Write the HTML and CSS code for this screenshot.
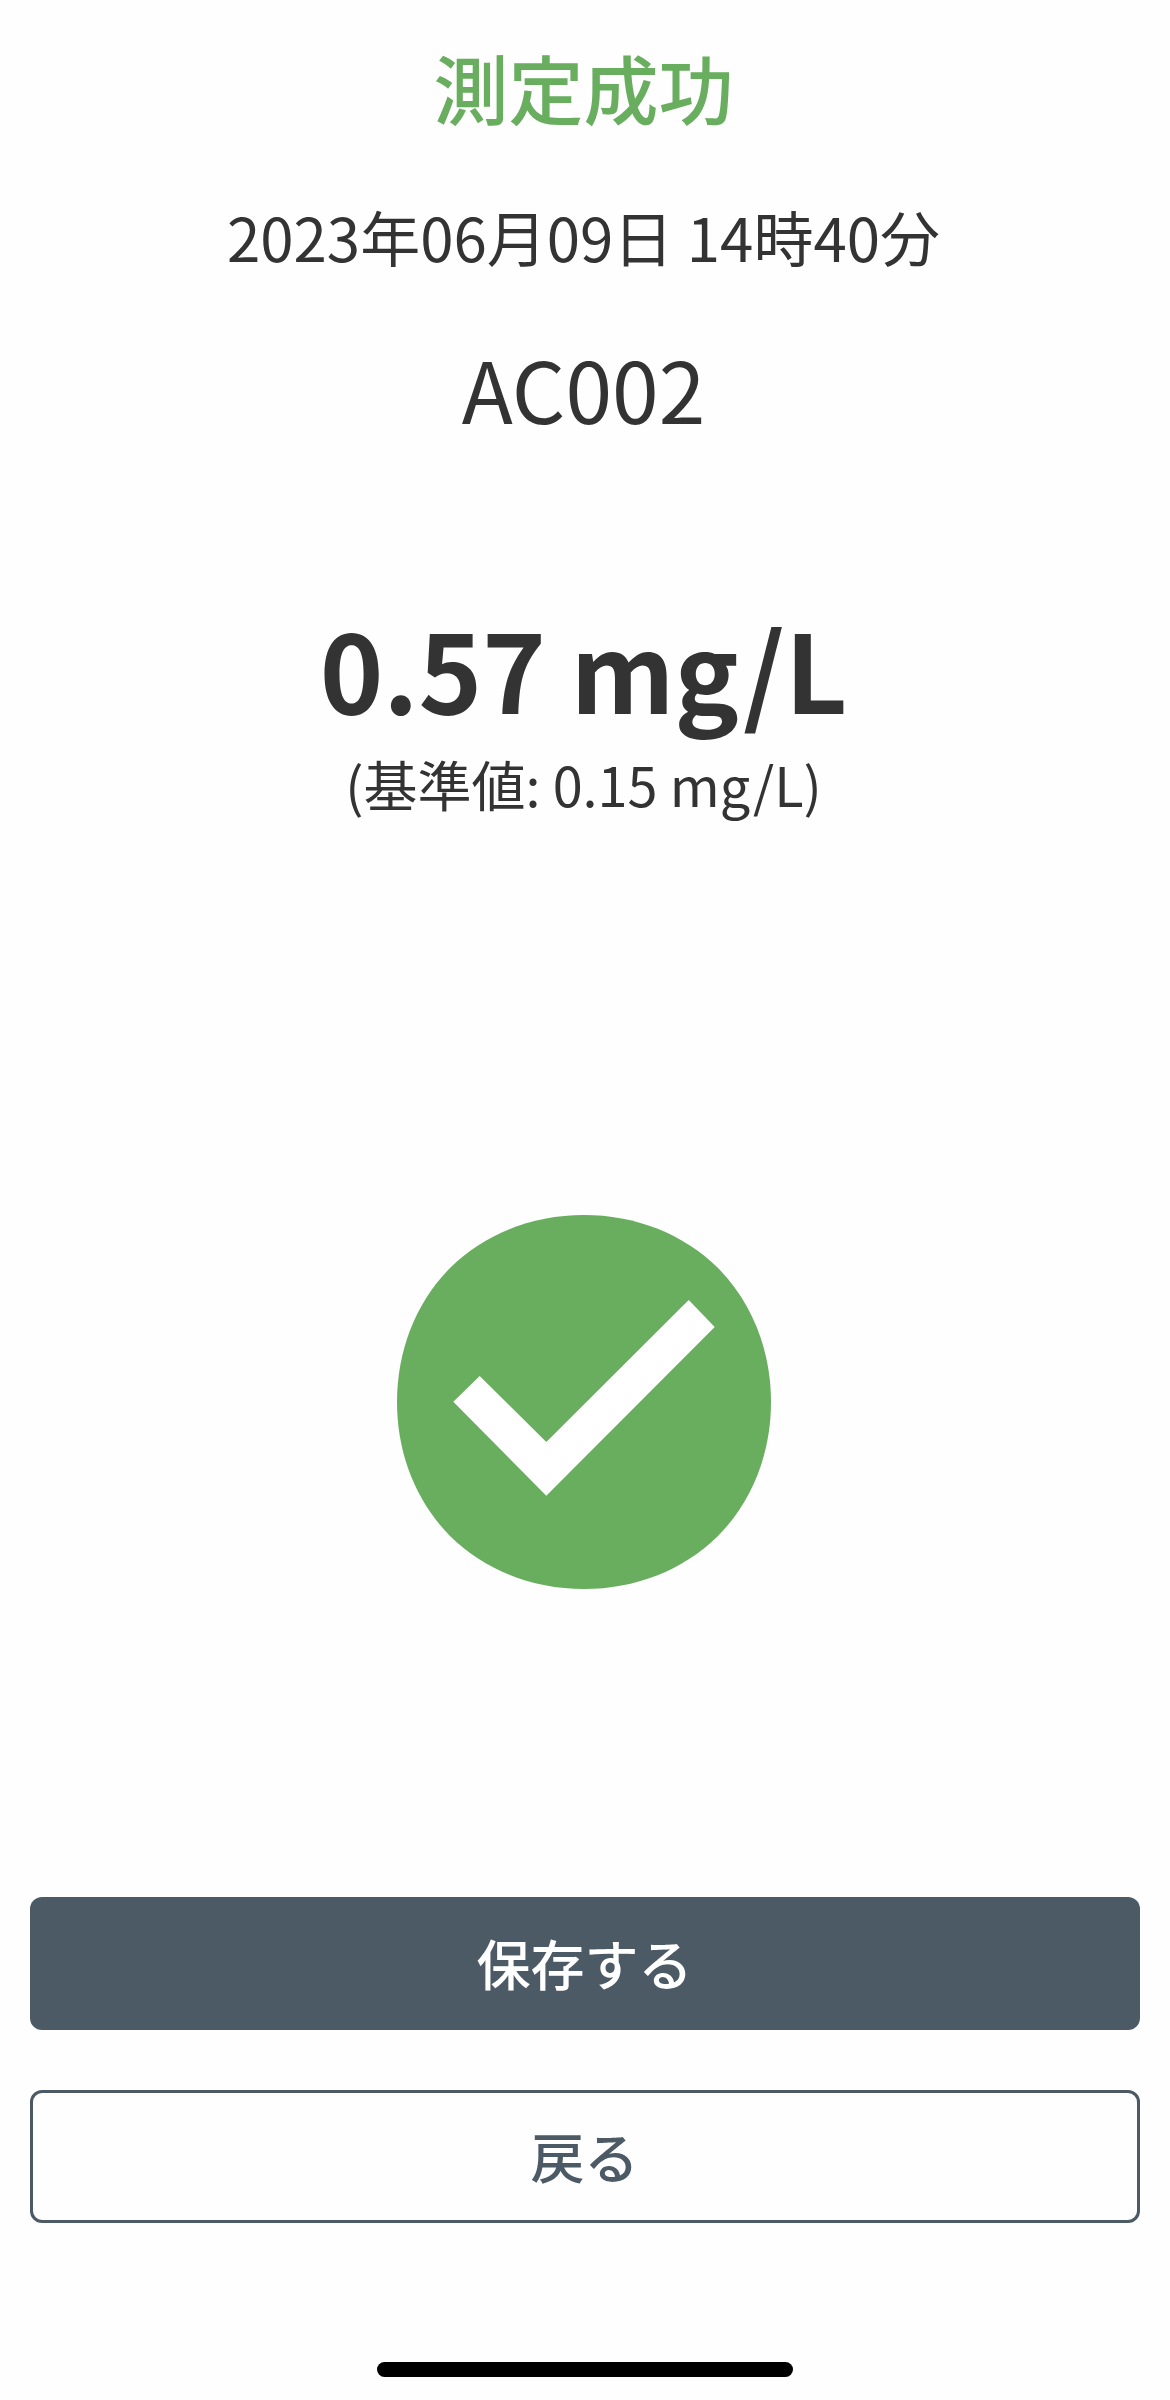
FILE: index.html
```html
<!DOCTYPE html>
<html lang="ja">
<head>
    <meta charset="UTF-8">
    <meta name="viewport" content="width=device-width, initial-scale=1.0">
    <title>測定成功</title>
    <link rel="stylesheet" href="styles.css">
</head>
<body>
    <div class="screen">
        <h1 class="status">測定成功</h1>
        <p class="date">2023年06月09日 14時40分</p>
        <p class="device">AC002</p>

        <div class="result">
            <p class="value">0.57 mg/L</p>
            <p class="limit">(基準値: 0.15 mg/L)</p>
        </div>

        <div class="mark">
            <svg width="374" height="374" viewBox="0 0 374 374">
                <path fill="#69ae5f" d="M187 0C238 0 286 18.500 321 53C355.500 88 374 136 374 187C374 238 355.500 286 321 321C286 355.500 238 374 187 374C136 374 88 355.500 53 321C18.500 286 0 238 0 187C0 136 18.500 88 53 53C88 18.500 136 0 187 0Z"/>
                <path fill="#fff" d="M56.3 186.7L82.7 161L149.3 227L291.7 85L317.7 112L149.3 280.7Z"/>
            </svg>
        </div>

        <div class="actions">
            <button class="btn btn-save">保存する</button>
            <button class="btn btn-back">戻る</button>
        </div>

        <div class="home-bar"></div>
    </div>
</body>
</html>
```

FILE: styles.css
```css
body {
    margin: 0;
    background: #fefefe;
    font-family: "Noto Sans CJK JP", "Noto Sans", sans-serif;
    color: #333;
}
p, h1 {
    margin: 0;
    padding-right: 3px;
    text-align: center;
}
.screen {
    height: 2400px;
    display: flex;
    flex-direction: column;
    box-sizing: border-box;
    padding: 34px 30px 0;
}
.status {
    font-size: 75px;
    line-height: 106px;
    font-weight: 500;
    color: #69ae5f;
}
.date {
    margin-top: 52px;
    font-size: 60px;
    line-height: 88px;
}
.device {
    margin-top: 46px;
    font-size: 84px;
    line-height: 124px;
}
.result {
    margin-top: 147px;
}
.value {
    font-size: 108px;
    font-weight: 700;
    line-height: 140px;
}
.limit {
    margin-top: 7px;
    font-size: 54px;
    line-height: 80px;
}
.mark {
    margin-top: 391px;
    padding-right: 3px;
    display: flex;
    justify-content: center;
}
.mark svg {
    display: block;
}
.actions {
    margin-top: 308px;
    display: flex;
    flex-direction: column;
    gap: 60px;
}
.btn {
    height: 133px;
    padding: 0 1px 2px 0;
    border-radius: 12px;
    font-family: inherit;
    font-size: 54px;
    font-weight: 500;
}
.btn-save {
    background: #4c5a65;
    border: none;
    color: #fff;
}
.btn-back {
    background: #fefefe;
    border: 3px solid #4c5a65;
    color: #4c5a65;
}
.home-bar {
    width: 416px;
    height: 15px;
    margin: 139px auto 0;
    border-radius: 8px;
    background: #000;
}
```
